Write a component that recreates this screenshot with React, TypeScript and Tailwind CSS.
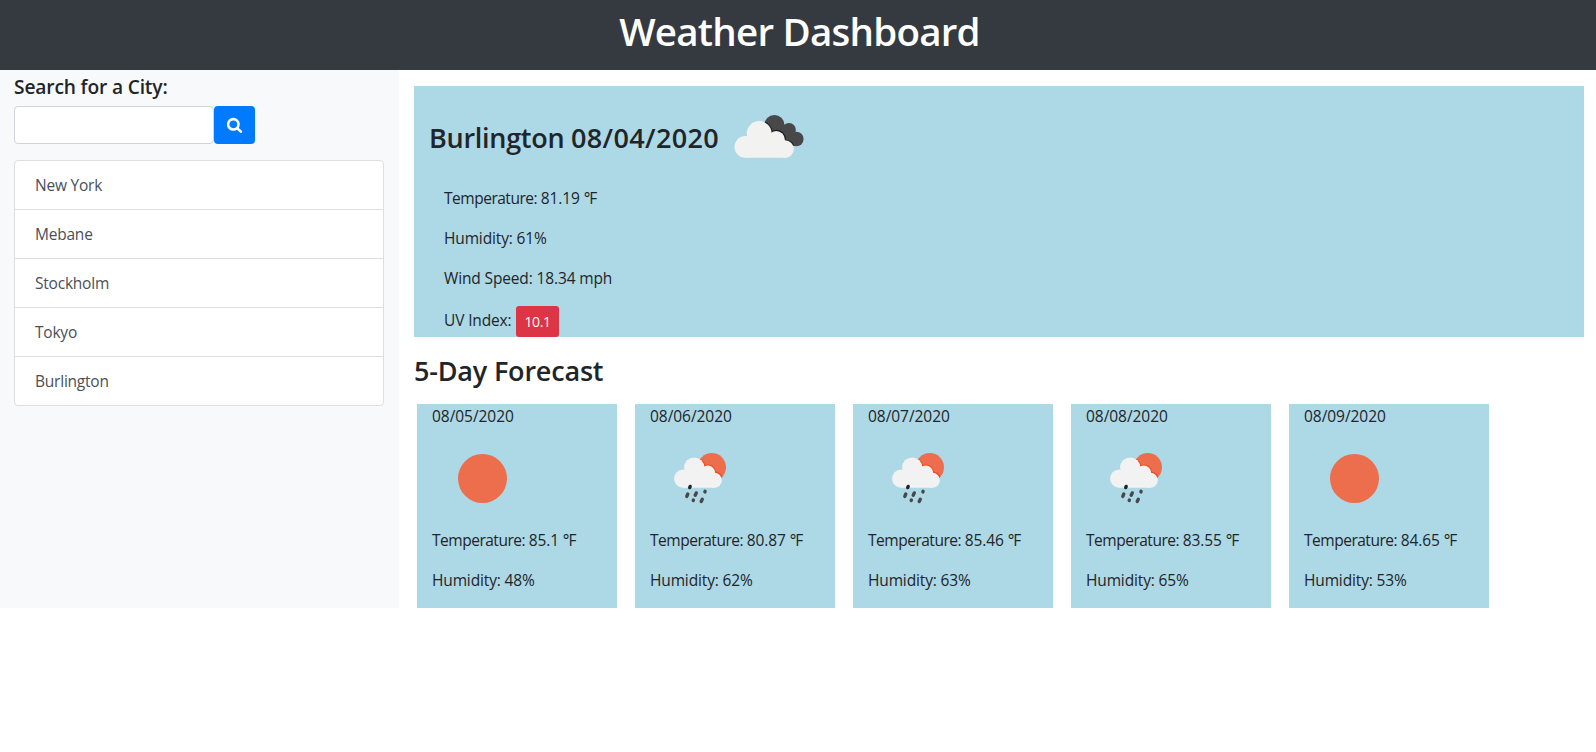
const cities = ["New York", "Mebane", "Stockholm", "Tokyo", "Burlington"];

function SearchIcon() {
  return (
    <svg className="size-[16px]" viewBox="0 0 16 16" fill="none" stroke="currentColor">
      <circle cx="6.3" cy="7.3" r="5.2" strokeWidth="2.6" />
      <path d="M10.4 11.4L13.8 14.5" strokeWidth="2.6" strokeLinecap="round" />
    </svg>
  );
}

function Sun() {
  return (
    <svg className="block size-[100px]" viewBox="0 0 100 100">
      <circle cx="50.5" cy="50.5" r="24.5" fill="#ec6e4c" />
    </svg>
  );
}

function Rain() {
  return (
    <svg className="block size-[100px]" viewBox="0 0 100 100">
      <clipPath id="sunClip">
        <circle cx="61.8" cy="39.2" r="14.2" />
      </clipPath>
      <circle cx="61.8" cy="39.2" r="14.2" fill="#ec6e4c" />
      <g clipPath="url(#sunClip)" fill="#ef4a24">
        <circle cx="44.4" cy="39.4" r="10.9" />
        <circle cx="58" cy="44.4" r="7.9" />
        <circle cx="64.3" cy="52" r="8.8" />
      </g>
      <g fill="#f2f2f2">
        <circle cx="33.1" cy="50.6" r="9.1" />
        <circle cx="44.2" cy="39.5" r="10.1" />
        <circle cx="57.8" cy="45" r="7.4" />
        <circle cx="64.4" cy="52.2" r="7.5" />
        <path d="M33 42H60L65 59.7H33Z" />
      </g>
      <g stroke="#48484a" strokeWidth="3.4" strokeLinecap="round">
        <path d="M40.2 58.4L39.7 59.6" stroke="#222" />
        <path d="M37.8 66L36.8 68.4" />
        <path d="M46.3 64.9L45.2 67.3" />
        <path d="M55.1 63.3L54.9 63.9" />
        <path d="M43.4 72.1L43.2 72.5" />
        <path d="M52.3 71.2L51.2 73.5" />
      </g>
    </svg>
  );
}

function Clouds() {
  return (
    <svg className="block size-[100px]" viewBox="0 0 100 100">
      <g fill="#48484a">
        <circle cx="55.4" cy="39.3" r="10.2" />
        <circle cx="70" cy="44" r="6.9" />
        <circle cx="77.3" cy="53" r="7.3" />
        <path d="M55 40L70 40L80 52L74 60L60 50Z" />
      </g>
      <clipPath id="darkClip">
        <circle cx="55.4" cy="39.3" r="10.2" />
        <circle cx="70" cy="44" r="6.9" />
        <circle cx="77.3" cy="53" r="7.3" />
        <path d="M55 40L70 40L80 52L74 60L60 50Z" />
      </clipPath>
      <g fill="#1f1f22" clipPath="url(#darkClip)">
        <circle cx="40.5" cy="47.5" r="13.2" />
        <circle cx="57.6" cy="53.1" r="9.3" />
        <circle cx="66.2" cy="63.1" r="9.7" />
      </g>
      <g fill="#f2f2f0">
        <circle cx="26.4" cy="60.9" r="10.9" />
        <circle cx="40.2" cy="47.5" r="12.4" />
        <circle cx="57.2" cy="53.6" r="8.6" />
        <circle cx="66.1" cy="63.1" r="8.8" />
        <path d="M26.4 50H58L66.5 71.8H26.4Z" />
      </g>
    </svg>
  );
}

const forecast = [
  { date: "08/05/2020", icon: Sun, temp: "85.1", humidity: 48 },
  { date: "08/06/2020", icon: Rain, temp: "80.87", humidity: 62 },
  { date: "08/07/2020", icon: Rain, temp: "85.46", humidity: 63 },
  { date: "08/08/2020", icon: Rain, temp: "83.55", humidity: 65 },
  { date: "08/09/2020", icon: Sun, temp: "84.65", humidity: 53 },
];

function Temperature({ value }: { value: string }) {
  return (
    <p>
      <span className="tracking-[-0.48px]">Temperature: </span>
      <span className="tracking-[-0.1px]">{value} </span>
      <span className="tracking-[-1px]">°F</span>
    </p>
  );
}

export default function App() {
  return (
    <div className="min-h-[752px] bg-white font-['Open_Sans','Noto_Sans',sans-serif] text-[15.5px]/6 tracking-[-0.14px] text-[#212529]">
      <header className="h-[70px] bg-[#343a40] pt-[7px] pl-[3px] text-center">
        <h1 className="text-[38.5px]/[48px] font-semibold tracking-[-0.76px] text-white">Weather Dashboard</h1>
      </header>
      <div className="flex h-[538px]">
        <aside className="w-[399px] shrink-0 bg-[#f8f9fa] pr-[15px] pl-[14px]">
          <h5 className="pt-[5px] pb-[7px] text-[19.2px]/6 font-semibold tracking-[-0.16px]">Search for a City:</h5>
          <div className="flex">
            <input className="h-[38px] w-[200px] rounded border border-[#ced4da] bg-white px-3 outline-none" />
            <button className="flex h-[38px] w-[41px] items-center justify-center rounded bg-[#007bff] text-white">
              <SearchIcon />
            </button>
          </div>
          <ul className="mt-4 rounded border border-[#dfdfdf] bg-white tracking-[-0.22px] text-[#495057]">
            {cities.map((city) => (
              <li key={city} className="h-[49px] border-b border-[#dfdfdf] px-5 py-3 last:h-12 last:border-b-0">
                {city}
              </li>
            ))}
          </ul>
        </aside>
        <main className="min-w-0 grow pt-4 pr-3 pl-[15px]">
          <section className="h-[251px] bg-[#add8e6] pl-[15px]">
            <div className="flex h-[100px] items-center">
              <h3 className="w-[290px] pt-[3px] text-[27px]/[35px] font-semibold whitespace-nowrap">
                <span className="tracking-[-0.28px]">Burlington </span>
                <span className="tracking-[0.35px]">08/04/2020</span>
              </h3>
              <Clouds />
            </div>
            <div className="flex flex-col gap-4 pl-[15px]">
              <Temperature value="81.19" />
              <p>Humidity: 61%</p>
              <p>Wind Speed: 18.34 mph</p>
              <div className="flex h-[31px]">
                <p className="w-[72px] pt-[2px]">UV Index:</p>
                <span className="flex h-[31px] w-[43px] items-center justify-center rounded-[3px] bg-[#dc3545] text-sm/6 font-medium tracking-[-0.4px] text-white">
                  10.1
                </span>
              </div>
            </div>
          </section>
          <h3 className="h-[67px] pt-4 text-[27px]/[35px] font-semibold tracking-[-0.19px]">5-Day Forecast</h3>
          <div className="flex gap-[18px] pl-[3px]">
            {forecast.map(({ date, icon: Icon, temp, humidity }) => (
              <article key={date} className="h-[204px] w-[200px] bg-[#add8e6] pl-[15px]">
                <p className="tracking-[-0.05px]">{date}</p>
                <Icon />
                <Temperature value={temp} />
                <p className="mt-4">Humidity: {humidity}%</p>
              </article>
            ))}
          </div>
        </main>
      </div>
    </div>
  );
}
